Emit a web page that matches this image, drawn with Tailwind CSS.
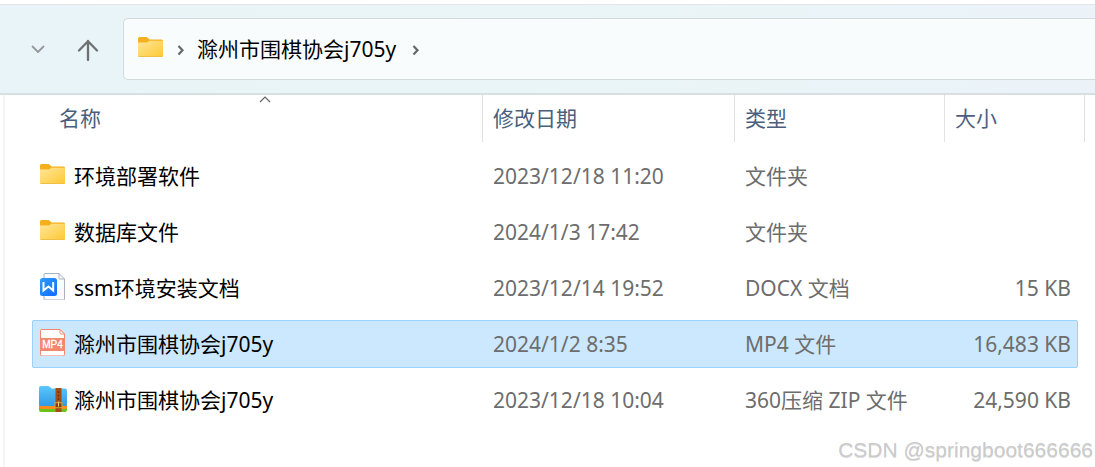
<!DOCTYPE html>
<html lang="zh-CN">
<head>
    <meta charset="UTF-8">
    <meta name="viewport" content="width=device-width, initial-scale=1.0">
    <title>滁州市围棋协会j705y</title>
    <script src="https://cdn.jsdelivr.net/npm/@tailwindcss/browser@4"></script>
</head>
<body class="bg-white font-['Noto_Sans','Noto_Sans_CJK_SC',sans-serif] text-[21px] leading-7 text-black">
    <!-- shared folder icon -->
    <svg class="absolute w-0 h-0" aria-hidden="true">
        <defs>
            <linearGradient id="folderFill" x1="0" y1="0" x2="1" y2="1">
                <stop offset="0" stop-color="#ffe69a"/>
                <stop offset="1" stop-color="#fdc832"/>
            </linearGradient>
            <symbol id="folder" viewBox="0 0 28 28">
                <path d="M1 5.500Q1 4 2.500 4H9q1 0 1.700.7L12.500 6.500H24.500Q26 6.500 26 8V12H1Z" fill="#f5b01e"/>
                <path d="M1 9.500H9.500q1 0 1.700-.7L12.300 7.800H25q1 0 1 1V22.500Q26 24 24.500 24H2.500Q1 24 1 22.500Z" fill="url(#folderFill)"/>
                <path d="M1.500 23.500H25.500" stroke="#f0bf45" stroke-width="1"/>
            </symbol>
        </defs>
    </svg>

    <header class="mt-1 flex items-center py-[13px] border-t border-t-[#e3e6e7] border-b-2 border-b-[#d7dfe2] bg-linear-to-r from-[#e9f4f8] via-[#eaf5f7] to-[#ebf3f8]">
        <button type="button" aria-label="最近浏览的位置" class="ml-6 w-7 h-7 flex items-center justify-center">
            <svg class="w-4 h-4" viewBox="0 0 16 16" fill="none" stroke="#96999b" stroke-width="1.800" stroke-linecap="round" stroke-linejoin="round"><path d="M2.500 5.500 8 11l5.500-5.500"/></svg>
        </button>
        <button type="button" aria-label="向上" class="ml-6 w-6 h-6 flex items-center justify-center">
            <svg class="w-6 h-6 shrink-0" viewBox="0 0 24 24" fill="none" stroke="#6d7172" stroke-width="2.300" stroke-linecap="round" stroke-linejoin="round"><path d="M12 23V4M3 13.500 12 4.200l9 9.300"/></svg>
        </button>
        <nav aria-label="地址" class="ml-[23px] flex-1 h-[62px] flex items-center pl-[13px] border border-r-0 border-[#d3dadc] rounded-l-[5px] bg-[#f9fcfd]">
            <svg class="w-7 h-7 mb-1"><use href="#folder"/></svg>
            <svg class="ml-2 w-4 h-4" viewBox="0 0 16 16" fill="none" stroke="#656768" stroke-width="2.200"><path d="M5.500 5 9.500 9.200l-4 4.200"/></svg>
            <a href="#" class="ml-2">滁州市围棋协会j705y</a>
            <svg class="ml-3 w-4 h-4" viewBox="0 0 16 16" fill="none" stroke="#656768" stroke-width="2.200"><path d="M5.500 5 9.500 9.200l-4 4.200"/></svg>
        </nav>
    </header>

    <main class="ml-[3px] border-l-2 border-[#f6f6f6] pl-[27px] pr-[10px]">
        <table class="block">
            <thead class="block text-[#4a5f7d]">
                <tr class="grid grid-cols-[minmax(0,1fr)_252px_210px_140px] h-[47px] text-left">
                    <th class="relative font-normal flex items-center pl-[27px] pb-0.5 border-r border-[#e2e2e2]">
                        名称
                        <svg class="absolute top-0 left-1/2 ml-0.5 w-3 h-2" viewBox="0 0 12 8" fill="none" stroke="#666" stroke-width="1.200"><path d="M1 7l5-5 5 5"/></svg>
                    </th>
                    <th class="font-normal flex items-center pl-2.5 pb-0.5 border-r border-[#e2e2e2]">修改日期</th>
                    <th class="font-normal flex items-center pl-2.5 pb-0.5 border-r border-[#e2e2e2]">类型</th>
                    <th class="font-normal flex items-center pl-2.5 pb-0.5 border-r border-[#e2e2e2]">大小</th>
                </tr>
            </thead>
            <tbody class="flex flex-col gap-2 pt-2.5 pr-[7px] text-[#6d6d6d]">
                <tr class="grid grid-cols-[minmax(0,1fr)_252px_210px_133px] items-center h-12">
                    <td class="flex items-center gap-[7px] pl-[7px] text-black">
                        <svg class="w-7 h-7 mb-1 shrink-0"><use href="#folder"/></svg>
                        环境部署软件
                    </td>
                    <td class="pl-2.5">2023/12/18 11:20</td>
                    <td class="pl-2.5">文件夹</td>
                    <td></td>
                </tr>
                <tr class="grid grid-cols-[minmax(0,1fr)_252px_210px_133px] items-center h-12">
                    <td class="flex items-center gap-[7px] pl-[7px] text-black">
                        <svg class="w-7 h-7 mb-1 shrink-0"><use href="#folder"/></svg>
                        数据库文件
                    </td>
                    <td class="pl-2.5">2024/1/3 17:42</td>
                    <td class="pl-2.5">文件夹</td>
                    <td></td>
                </tr>
                <tr class="grid grid-cols-[minmax(0,1fr)_252px_210px_133px] items-center h-12">
                    <td class="flex items-center gap-[7px] pl-[7px] text-black">
                        <svg class="w-7 h-7 mb-1 shrink-0" viewBox="0 0 28 28" fill="none">
                            <defs>
                                <linearGradient id="docFill" x1="0" y1="0" x2="1" y2="1">
                                    <stop offset="0" stop-color="#2f9dff"/>
                                    <stop offset="1" stop-color="#0c6bff"/>
                                </linearGradient>
                            </defs>
                            <path d="M6 1.500H20L25.500 7V27Q25.500 28 24.500 28H6Q5 28 5 27V2.500Q5 1.500 6 1.500Z" fill="#fafbfd" stroke="#a9b1bf"/>
                            <path d="M20 1.500V6Q20 7 21 7H25.500" stroke="#a9b1bf"/>
                            <rect x="1" y="6" width="17" height="18" rx="2.500" fill="url(#docFill)"/>
                            <path d="M4.500 10V18.500L9.500 14.500 14.200 18.500V10" stroke="#fff" stroke-width="2"/>
                        </svg>
                        ssm环境安装文档
                    </td>
                    <td class="pl-2.5">2023/12/14 19:52</td>
                    <td class="pl-2.5">DOCX 文档</td>
                    <td class="pr-[7px] text-right">15 KB</td>
                </tr>
                <tr aria-selected="true" class="grid grid-cols-[minmax(0,1fr)_252px_210px_133px] items-center h-12 rounded-[2px] bg-[#cce8ff] outline outline-[#99d1ff] -outline-offset-1">
                    <td class="flex items-center gap-[7px] pl-[7px] text-black">
                        <svg class="w-7 h-7 mb-1 shrink-0" viewBox="0 0 28 28" fill="none">
                            <path d="M2.500 1.500H21L25.500 6V26.500Q25.500 28 24 28H3Q1.500 28 1.500 26.500V2.500Q1.500 1.500 2.500 1.500Z" fill="#fff" stroke="#f3876f"/>
                            <path d="M21 1.500V5Q21 6 22 6H25.500Z" fill="#fff" stroke="#f3876f"/>
                            <rect x="1" y="10" width="25" height="13" fill="#f3876f"/>
                            <text x="13.500" y="20" text-anchor="middle" font-family="Liberation Sans, sans-serif" font-size="10" fill="#fff" stroke="#fff" stroke-width="0.300">MP4</text>
                        </svg>
                        滁州市围棋协会j705y
                    </td>
                    <td class="pl-2.5">2024/1/2 8:35</td>
                    <td class="pl-2.5">MP4 文件</td>
                    <td class="pr-[7px] text-right">16,483 KB</td>
                </tr>
                <tr class="grid grid-cols-[minmax(0,1fr)_252px_210px_133px] items-center h-12">
                    <td class="flex items-center gap-[7px] pl-[7px] text-black">
                        <svg class="w-7 h-7 mb-1 shrink-0" viewBox="0 0 28 28" fill="none">
                            <defs>
                                <linearGradient id="zipFill" x1="0" y1="0" x2="0" y2="1">
                                    <stop offset="0" stop-color="#5cc6fa"/>
                                    <stop offset="1" stop-color="#2f9be8"/>
                                </linearGradient>
                            </defs>
                            <path d="M0 18H28V26Q28 28 26 28H2Q0 28 0 26Z" fill="#6cc21c"/>
                            <path d="M0 17H28V23Q28 25 26 25H2Q0 25 0 23Z" fill="#ff8a1c"/>
                            <path d="M0 4Q0 2 2 2H9Q10.500 2 11.500 3.500T14 4.500H26Q28 4.500 28 6.500V20.500Q28 22 26 22H2Q0 22 0 20Z" fill="url(#zipFill)"/>
                            <rect x="16.500" y="4" width="6" height="24" fill="#a34d12"/>
                            <path d="M19.500 7.500V17" stroke="#5c2608" stroke-width="1.300" stroke-dasharray="1.300 2.200"/>
                            <rect x="16" y="18.700" width="7" height="5" fill="#8a3c0c" stroke="#e0a03e" stroke-width="1"/>
                            <path d="M19.500 17.500V22.500" stroke="#f7d27a" stroke-width="1"/>
                        </svg>
                        滁州市围棋协会j705y
                    </td>
                    <td class="pl-2.5">2023/12/18 10:04</td>
                    <td class="pl-2.5">360压缩 ZIP 文件</td>
                    <td class="pr-[7px] text-right">24,590 KB</td>
                </tr>
            </tbody>
        </table>
        <p class="-mr-2 pt-3 pb-1 text-right font-['Liberation_Sans',sans-serif] text-[#cbcbcb] text-shadow-2xs">CSDN @springboot666666</p>
    </main>
</body>
</html>
